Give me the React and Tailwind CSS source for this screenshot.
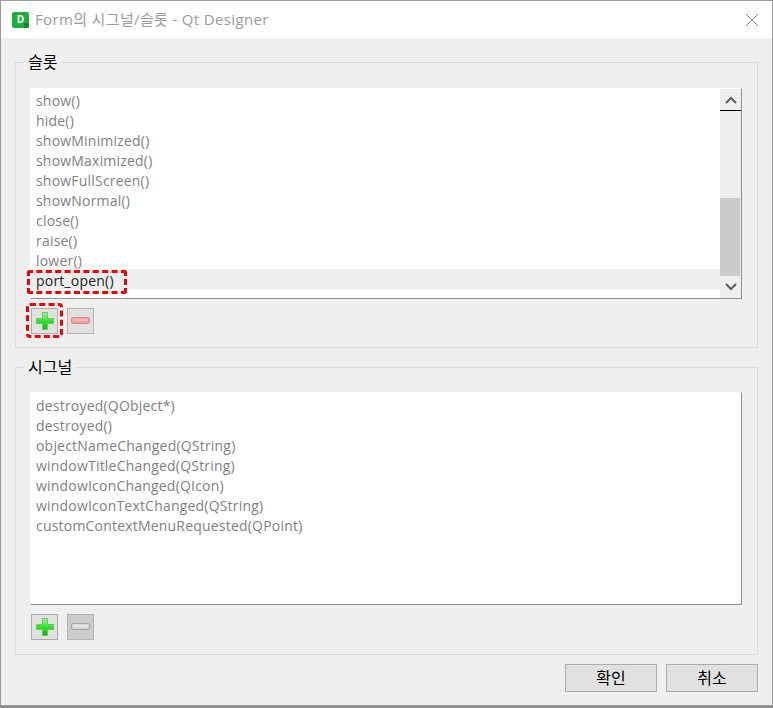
import React from 'react';

const font = "font-['Open_Sans','Noto_Sans_CJK_KR',sans-serif]";

const Plus = () => (
  <svg width="20" height="20" viewBox="0 0 20 20">
    <defs>
      <linearGradient id="plusFill" x1="0" y1="0" x2="0" y2="1">
        <stop offset="0" stopColor="#a4f2a0" />
        <stop offset="0.5" stopColor="#35e030" />
        <stop offset="1" stopColor="#12b515" />
      </linearGradient>
    </defs>
    <path d="M7.5 1.5h5v6h6v5h-6v6h-5v-6h-6v-5h6z" fill="url(#plusFill)" stroke="#63cc5f" strokeWidth="1" />
  </svg>
);

const Minus = ({ off }) => (
  <svg width="20" height="8" viewBox="0 0 20 8">
    <rect x="0.5" y="0.5" width="18" height="6" rx="1.5" fill={off ? '#d6d6d6' : '#f59a9a'} stroke={off ? '#a4a4a4' : '#d98a8a'} />
    <rect x="2" y="2" width="15" height="2" fill={off ? '#e6e6e6' : '#fbbcbc'} />
  </svg>
);

const ListBox = ({ rows, active, scroll, className }) => (
  <div className={`relative ml-[14px] mr-[15px] border border-t-white border-l-white border-r-[#8b9096] border-b-[#8b9096] bg-white ${className}`}>
    <div className="pr-[21px]">
      {rows.map((r) => (
        <div
          key={r}
          className={`h-5 pl-[5px] text-[14px] leading-[24px] tracking-[0.2px] ${r === active ? 'bg-[#eeeeee] text-[#222222]' : 'text-[#808080]'}`}
        >
          {r}
        </div>
      ))}
    </div>
    {scroll && (
      <div className="absolute right-0 top-0 bottom-0 flex w-[21px] flex-col bg-[#efefef]">
        <div className="flex h-[22px] items-center justify-center border-b border-black">
          <svg width="12" height="8" viewBox="0 0 12 8"><path d="M1 7l5-5 5 5" fill="none" stroke="#5c5c5c" strokeWidth="2" /></svg>
        </div>
        <div className="h-[87px]" />
        <div className="mr-[1px] h-[78px] bg-[#cbcbcb]" />
        <div className="flex flex-1 items-center justify-center">
          <svg width="12" height="8" viewBox="0 0 12 8"><path d="M1 1l5 5 5-5" fill="none" stroke="#5c5c5c" strokeWidth="2" /></svg>
        </div>
      </div>
    )}
  </div>
);

const ToolRow = ({ disabled }) => (
  <div className="mt-[9px] ml-[15px] flex gap-[9px]">
    <button className="flex h-[26px] w-[27px] items-center justify-center border border-[#acacac] bg-[#e1e1e1]">
      <Plus />
    </button>
    <button className={`flex h-[26px] w-[27px] items-center justify-center border border-[#b4b4b4] ${disabled ? 'bg-[#cccccc]' : 'bg-[#e1e1e1]'}`}>
      <Minus off={disabled} />
    </button>
  </div>
);

const Group = ({ title, className, children }) => (
  <div className={`relative border border-[#dcdcdc] ${className}`}>
    <span className="absolute -top-[11px] left-[8px] bg-[#efefef] px-[4px] text-[16px] leading-5 text-black">{title}</span>
    {children}
  </div>
);

export default function App() {
  return (
    <div className={`flex h-[708px] w-[773px] flex-col overflow-hidden bg-[#8d8d8d] ${font}`}>
      <div className="flex h-[706px] flex-col border border-[#9a9a9a] bg-[#efefef]">
        {/* title bar */}
        <div className="flex h-[37px] items-center bg-white pl-[11px] pr-[13px]">
          <div className="relative flex h-[16px] w-[17px] items-center justify-center overflow-hidden rounded-[2px] bg-[#1fae3a] text-[10px] font-bold text-white">
            D
            <span className="absolute right-0 bottom-0 h-[5px] w-[5px] bg-[#15892c]" />
          </div>
          <span className="ml-[6px] text-[15px] tracking-[0.35px] text-[#9a9a9a]">Form의 시그널/슬롯 - Qt Designer</span>
          <svg className="ml-auto" width="14" height="14" viewBox="0 0 14 14"><path d="M1 1l12 12M13 1L1 13" stroke="#8a8a8a" strokeWidth="1" /></svg>
        </div>

        <div className="flex flex-1 flex-col px-[14px] pt-[24px]">
          <Group title="슬롯" className="h-[286px]">
            <ListBox
              className="mt-[25px] h-[211px]"
              scroll
              active="port_open()"
              rows={['show()', 'hide()', 'showMinimized()', 'showMaximized()', 'showFullScreen()', 'showNormal()', 'close()', 'raise()', 'lower()', 'port_open()']}
            />
            <ToolRow />
            {/* red callouts */}
            <div className="absolute left-[11px] top-[207px] h-[24px] w-[100px] rounded-[3px] border-[3px] border-dashed border-[#f00000]" />
            <div className="absolute left-[10px] top-[240px] h-[35px] w-[37px] rounded-[4px] border-[3px] border-dashed border-[#f00000]" />
          </Group>

          <Group title="시그널" className="mt-[19px] h-[288px]">
            <ListBox
              className="mt-[24px] h-[213px] pt-[1px]"
              rows={['destroyed(QObject*)', 'destroyed()', 'objectNameChanged(QString)', 'windowTitleChanged(QString)', 'windowIconChanged(QIcon)', 'windowIconTextChanged(QString)', 'customContextMenuRequested(QPoint)']}
            />
            <ToolRow disabled />
          </Group>

          <div className="mt-[9px] flex justify-end gap-[9px]">
            <button className="h-[28px] w-[92px] border border-[#adadad] bg-[#e1e1e1] text-[16px] text-black">확인</button>
            <button className="h-[28px] w-[92px] border border-[#adadad] bg-[#e1e1e1] text-[16px] text-black">취소</button>
          </div>
        </div>
      </div>
    </div>
  );
}
